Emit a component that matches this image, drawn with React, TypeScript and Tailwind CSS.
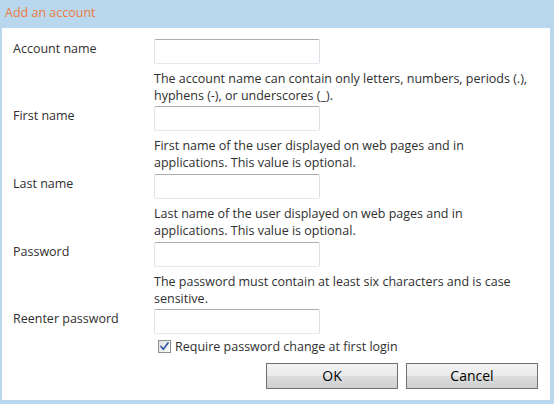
const fields: { label: string; help?: string[]; gap: string }[] = [
  {
    label: "Account name",
    help: [
      "The account name can contain only letters, numbers, periods (.),",
      "hyphens (-), or underscores (_).",
    ],
    gap: "mb-[2px]",
  },
  {
    label: "First name",
    help: [
      "First name of the user displayed on web pages and in",
      "applications. This value is optional.",
    ],
    gap: "mb-[3px]",
  },
  {
    label: "Last name",
    help: [
      "Last name of the user displayed on web pages and in",
      "applications. This value is optional.",
    ],
    gap: "mb-[3px]",
  },
  {
    label: "Password",
    help: ["The password must contain at least six characters and is case", "sensitive."],
    gap: "mb-[2px]",
  },
  { label: "Reenter password", gap: "mb-0" },
];

const TextBox = () => (
  <input
    type="text"
    className="block h-[25px] w-[166px] rounded-[2px] border border-t-[#abadb3] border-l-[#e2e3ea] border-r-[#dbdfe6] border-b-[#e3e9ef] bg-white outline-none"
  />
);

const Button = ({ children }: { children: string }) => (
  <button
    type="button"
    className="h-[26px] w-[132px] border border-[#707070] bg-[linear-gradient(#f2f2f2_0%,#ebebeb_50%,#dddddd_50%,#cfcfcf_100%)] text-[14px] leading-none text-black"
  >
    {children}
  </button>
);

export default function App() {
  return (
    <div
      className="flex h-[404px] w-[554px] flex-col bg-[#b9d8ee] pb-[4px] pl-[2px] pr-[4px] text-[#2f2f2f]"
      style={{ fontFamily: '"Open Sans", "Noto Sans", sans-serif' }}
    >
      <div className="flex h-[28px] items-center pl-[3px] pb-[2px] text-[12.5px] text-[#ee7b3e]">
        Add an account
      </div>
      <div className="flex-1 bg-white pl-[11px] pr-[12px] pt-[11px] text-[12.5px] leading-[17px]">
        {fields.map((f) => (
          <div key={f.label} className={`${f.gap} grid grid-cols-[141px_1fr]`}>
            <div className="pt-[1px]">{f.label}</div>
            <div>
              <TextBox />
              {f.help ? (
                <div className="mt-[6px]">
                  {f.help.map((line) => (
                    <div key={line} className="whitespace-nowrap">
                      {line}
                    </div>
                  ))}
                </div>
              ) : null}
            </div>
          </div>
        ))}
        <div className="ml-[145px] mt-[4px] flex items-center gap-[4px]">
          <span className="flex h-[13px] w-[13px] items-center justify-center border border-[#8e8f8f] bg-[linear-gradient(135deg,#dcdcdc,#ffffff)]">
            <svg viewBox="0 0 11 11" className="h-[11px] w-[11px]">
              <path
                d="M2 5.5 L4.3 8.3 L9 2"
                fill="none"
                stroke="#3a5aa8"
                strokeWidth="1.8"
                strokeLinecap="round"
                strokeLinejoin="round"
              />
            </svg>
          </span>
          <span>Require password change at first login</span>
        </div>
        <div className="mt-[8px] flex justify-end gap-[8px]">
          <Button>OK</Button>
          <Button>Cancel</Button>
        </div>
      </div>
    </div>
  );
}
